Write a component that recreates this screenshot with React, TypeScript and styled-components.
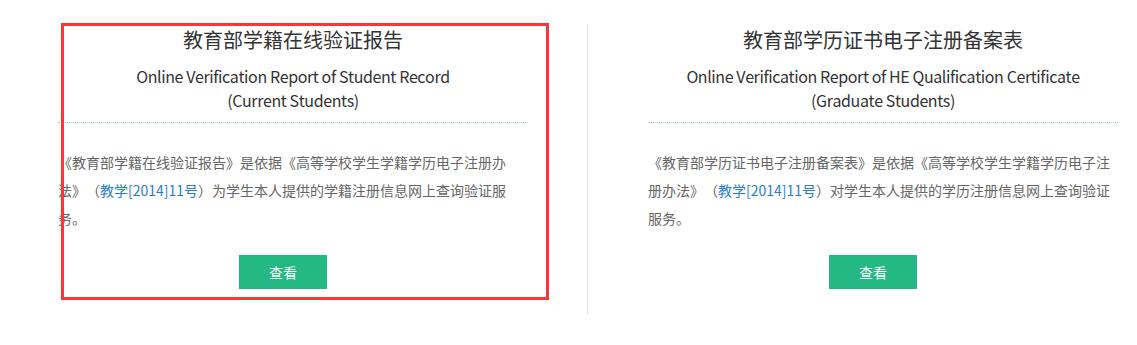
import React from 'react'
import styled, { createGlobalStyle } from 'styled-components'

interface Report {
  title: string
  english: string[]
  name: string
  tail: string
}

const reports: Report[] = [
  {
    title: '教育部学籍在线验证报告',
    english: ['Online Verification Report of Student Record', '(Current Students)'],
    name: '《教育部学籍在线验证报告》',
    tail: '为学生本人提供的学籍注册信息网上查询验证服务。'
  },
  {
    title: '教育部学历证书电子注册备案表',
    english: [
      'Online Verification Report of HE Qualification Certificate',
      '(Graduate Students)'
    ],
    name: '《教育部学历证书电子注册备案表》',
    tail: '对学生本人提供的学历注册信息网上查询验证服务。'
  }
]

const ReportCard: React.FC<{ report: Report; marked?: boolean }> = ({
  report,
  marked
}) => (
  <Card>
    {marked && <Highlight />}
    <Header>
      <Title>{report.title}</Title>
      <English>
        {report.english.map(line => (
          <div key={line}>{line}</div>
        ))}
      </English>
    </Header>
    <Description>
      {report.name}是依据《高等学校学生学籍学历电子注册办法》（
      <DocLink href="#">教学[2014]11号</DocLink>）{report.tail}
    </Description>
    <ButtonRow>
      <ViewButton type="button">查看</ViewButton>
    </ButtonRow>
  </Card>
)

const App: React.FC = () => (
  <>
    <GlobalStyle />
    <Page>
      <ReportCard report={reports[0]} marked />
      <Divider />
      <ReportCard report={reports[1]} />
    </Page>
  </>
)

export default App

const GlobalStyle = createGlobalStyle`
  body {
    margin: 0;
    background: #fff;
    font-family: "Microsoft YaHei", "Noto Sans CJK SC", sans-serif;
    text-spacing-trim: space-all;
    font-kerning: none;
  }
`

const Page = styled.div`
  display: flex;
  align-items: stretch;
  padding: 24px 0 30px 58px;
  height: 345px;
  box-sizing: border-box;
`

const Divider = styled.div`
  width: 1px;
  background: #e5e5e5;
  margin: 0 60px 0 59px;
`

const Card = styled.div`
  position: relative;
  width: 470px;
  padding-bottom: 26px;
`

const Highlight = styled.div`
  position: absolute;
  left: 3px;
  top: -1px;
  width: 488px;
  height: 277px;
  border: 3px solid #fb3636;
  box-sizing: border-box;
  pointer-events: none;
`

const Header = styled.div`
  text-align: center;
  padding-bottom: 10px;
  border-bottom: 1px dotted #9fd5c5;
`

const Title = styled.h3`
  margin: 0;
  font-size: 20px;
  line-height: 32px;
  font-weight: normal;
  color: #333;
`

const English = styled.div`
  margin-top: 8px;
  font-size: 16px;
  line-height: 24px;
  letter-spacing: -0.4px;
  color: #333;
`

const Description = styled.p`
  margin: 25px 0 0;
  font-size: 14px;
  line-height: 28px;
  color: #666;
`

const DocLink = styled.a`
  color: #2b7bd0;
  text-decoration: none;
`

const ButtonRow = styled.div`
  display: flex;
  justify-content: center;
  padding-right: 20px;
  margin-top: 23px;
`

const ViewButton = styled.button`
  width: 88px;
  height: 34px;
  border: none;
  background: #23b884;
  color: #fff;
  font-family: inherit;
  font-size: 14px;
  cursor: pointer;

  &:hover {
    background: #1ea374;
  }
`
